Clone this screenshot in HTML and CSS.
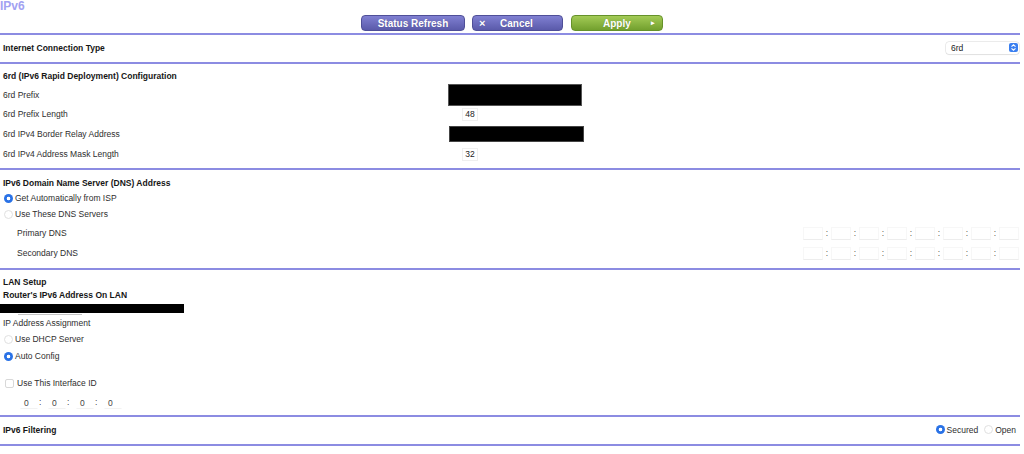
FILE: index.html
```html
<!DOCTYPE html>
<html>
<head>
<meta charset="utf-8">
<title>IPv6</title>
<link rel="stylesheet" href="styles.css">
</head>
<body>
<div class="page">
  <div class="title">IPv6</div>
  <div class="toolbar">
    <div class="btn btn-purple btn-refresh" role="button">Status Refresh</div>
    <div class="btn btn-purple btn-cancel" role="button"><span class="btn-x">×</span><span>Cancel</span></div>
    <div class="btn btn-green btn-apply" role="button"><span>Apply</span><span class="btn-arrow">▸</span></div>
  </div>
  <div class="rule"></div>

  <div class="row row-ict">
    <span class="heading">Internet Connection Type</span>
    <div class="select">
      <span>6rd</span>
      <span class="select-arrow">
        <svg width="9" height="9" viewBox="0 0 9 9"><path d="M2.5 3.6 L4.5 1.8 L6.5 3.6" fill="none" stroke="#fff" stroke-width="1.1"/><path d="M2.5 5.4 L4.5 7.2 L6.5 5.4" fill="none" stroke="#fff" stroke-width="1.1"/></svg>
      </span>
    </div>
  </div>
  <div class="rule"></div>

  <div class="section sec-6rd">
    <div class="heading h15">6rd (IPv6 Rapid Deployment) Configuration</div>
    <div class="field-row">
      <span class="label">6rd Prefix</span>
      <span class="redact redact-a"></span>
    </div>
    <div class="field-row">
      <span class="label">6rd Prefix Length</span>
      <span class="smallbox">48</span>
    </div>
    <div class="field-row">
      <span class="label">6rd IPv4 Border Relay Address</span>
      <span class="redact redact-b"></span>
    </div>
    <div class="field-row">
      <span class="label">6rd IPv4 Address Mask Length</span>
      <span class="smallbox">32</span>
    </div>
  </div>
  <div class="rule"></div>

  <div class="section sec-dns">
    <div class="heading h16">IPv6 Domain Name Server (DNS) Address</div>
    <label class="opt h15"><span class="radio on"></span>Get Automatically from ISP</label>
    <label class="opt h17"><span class="radio"></span>Use These DNS Servers</label>
    <div class="dns-row">
      <span class="sublabel">Primary DNS</span>
      <div class="ip6">
        <span class="seg"></span><span class="colon">:</span><span class="seg"></span><span class="colon">:</span><span class="seg"></span><span class="colon">:</span><span class="seg"></span><span class="colon">:</span><span class="seg"></span><span class="colon">:</span><span class="seg"></span><span class="colon">:</span><span class="seg"></span><span class="colon">:</span><span class="seg"></span>
      </div>
    </div>
    <div class="dns-row">
      <span class="sublabel">Secondary DNS</span>
      <div class="ip6">
        <span class="seg"></span><span class="colon">:</span><span class="seg"></span><span class="colon">:</span><span class="seg"></span><span class="colon">:</span><span class="seg"></span><span class="colon">:</span><span class="seg"></span><span class="colon">:</span><span class="seg"></span><span class="colon">:</span><span class="seg"></span><span class="colon">:</span><span class="seg"></span>
      </div>
    </div>
  </div>
  <div class="rule"></div>

  <div class="section sec-lan">
    <div class="heading h14">LAN Setup</div>
    <div class="heading h13">Router's IPv6 Address On LAN</div>
    <div class="redact redact-lan"></div>
    <div class="underline"></div>
    <div class="plain h17">IP Address Assignment</div>
    <label class="opt h15"><span class="radio"></span>Use DHCP Server</label>
    <label class="opt h18"><span class="radio on"></span>Auto Config</label>
    <label class="check-row"><span class="checkbox"></span>Use This Interface ID</label>
    <div class="iid">
      <span class="iseg">0</span><span class="icolon">:</span><span class="iseg">0</span><span class="icolon">:</span><span class="iseg">0</span><span class="icolon">:</span><span class="iseg">0</span>
    </div>
  </div>
  <div class="rule"></div>

  <div class="row row-filter">
    <span class="heading">IPv6 Filtering</span>
    <div class="filter-opts">
      <label class="opt-inline"><span class="radio on"></span>Secured</label>
      <label class="opt-inline"><span class="radio"></span>Open</label>
    </div>
  </div>
  <div class="rule"></div>
</div>
</body>
</html>
```

FILE: styles.css
```css
* { box-sizing: border-box; }

html, body {
  margin: 0;
  padding: 0;
  background: #ffffff;
}

body {
  font-family: "Liberation Sans", Arial, Helvetica, sans-serif;
  font-size: 8.5px;
  color: #2e2e2e;
  width: 1024px;
  overflow: hidden;
}

.page {
  width: 1024px;
}

.title {
  font-size: 12px;
  font-weight: bold;
  color: #a2a2f2;
  line-height: 12px;
  height: 12px;
}

.toolbar {
  display: flex;
  justify-content: center;
  height: 16px;
  margin-top: 3px;
  margin-bottom: 2px;
}

.btn {
  height: 16px;
  border-radius: 4px;
  font-size: 10px;
  font-weight: bold;
  color: #ffffff;
  display: flex;
  align-items: center;
  justify-content: flex-start;
  text-shadow: 0 0 1px rgba(0,0,0,0.25);
  cursor: pointer;
}

.btn-purple {
  background: linear-gradient(#8080d2, #5a5aaa);
  border: 1px solid #4f4f98;
}

.btn-green {
  background: linear-gradient(#a3cb56, #72a02e);
  border: 1px solid #66922a;
}

.btn-refresh {
  width: 104px;
  justify-content: center;
  margin-right: 7px;
}

.btn-cancel {
  width: 91px;
  margin-right: 8px;
  padding-left: 6px;
}

.btn-x {
  font-size: 11px;
  width: 21px;
}

.btn-apply {
  width: 92px;
  padding-left: 31px;
}

.btn-arrow {
  font-size: 7px;
  margin-left: 20px;
}

.rule {
  width: 1020px;
  height: 2px;
  background: #8c8ce2;
}

.heading {
  font-weight: bold;
  color: #161616;
}

.row {
  display: flex;
  align-items: center;
  justify-content: space-between;
  padding-left: 3px;
  width: 1020px;
}

.row-ict {
  height: 27px;
  padding-right: 1px;
  padding-bottom: 2px;
}

.select {
  width: 73px;
  height: 12px;
  border-radius: 3px;
  background: #ffffff;
  box-shadow: 0 0 0 0.5px #d8d8d8, 0 1px 1px rgba(0,0,0,0.08);
  display: flex;
  align-items: center;
  justify-content: space-between;
  padding-left: 5px;
  padding-right: 1px;
  color: #222;
}

.select-arrow {
  width: 9px;
  height: 9px;
  border-radius: 2px;
  background: #3a7ff0;
  display: flex;
}

.section {
  width: 1020px;
}

.h13 { height: 13px; line-height: 13px; }
.h14 { height: 14px; line-height: 14px; }
.h15 { height: 15px; line-height: 15px; }
.h16 { height: 16px; line-height: 16px; }
.h17 { height: 17px; line-height: 17px; }
.h18 { height: 18px; line-height: 18px; }

.sec-6rd {
  padding: 5px 0 4px 3px;
}

.field-row {
  display: grid;
  grid-template-columns: 445px auto;
  align-items: center;
  height: 20px;
}

.redact {
  background: #000000;
  display: block;
}

.redact-a {
  width: 134px;
  height: 22px;
  border: 1px solid #555;
}

.redact-b {
  width: 135px;
  height: 16px;
  margin-left: 1px;
  border: 1px solid #444;
}

.smallbox {
  width: 16px;
  height: 13px;
  margin-left: 14px;
  border: 1px solid #efefef;
  text-align: center;
  line-height: 11px;
  color: #222;
}

.sec-dns {
  padding: 5px 0 5px 3px;
}

.opt {
  display: flex;
  align-items: center;
}

.radio {
  display: inline-block;
  width: 9px;
  height: 9px;
  border-radius: 50%;
  border: 1px solid #e0e0e0;
  background: #ffffff;
  margin-left: 1px;
  margin-right: 2px;
  flex: none;
}

.radio.on {
  border: none;
  background: radial-gradient(circle, #ffffff 0 1.6px, #2a72e6 2.1px);
}

.dns-row {
  display: flex;
  align-items: center;
  justify-content: space-between;
  height: 20px;
  padding-right: 1px;
}

.sublabel {
  padding-left: 14px;
}

.ip6 {
  display: flex;
  align-items: center;
}

.seg {
  width: 20px;
  height: 13px;
  border: 1px solid #f7f7f7;
  border-bottom-color: #ededed;
}

.colon {
  width: 8px;
  text-align: center;
  color: #555;
}

.sec-lan {
  padding: 5px 0 4px 3px;
}

.redact-lan {
  width: 184px;
  height: 9px;
  margin-left: -3px;
  margin-top: 2px;
}

.underline {
  width: 64px;
  height: 1px;
  margin-left: 15px;
  margin-top: 1px;
  background: #c4c4c4;
}

.plain {
  color: #2e2e2e;
}

.check-row {
  display: flex;
  align-items: center;
  height: 20px;
  margin-top: 8px;
}

.checkbox {
  width: 9px;
  height: 9px;
  border: 1px solid #d8d8d8;
  border-radius: 2px;
  margin-left: 2px;
  margin-right: 3px;
  background: #fff;
}

.iid {
  display: flex;
  align-items: center;
  height: 18px;
  padding-left: 17px;
}

.iseg {
  width: 18px;
  height: 13px;
  line-height: 13px;
  padding-left: 3px;
  border: 1px solid transparent;
  border-bottom-color: #f2f2f2;
  color: #444;
}

.icolon {
  width: 10px;
  text-align: left;
  padding-left: 1px;
  color: #444;
}

.row-filter {
  height: 25px;
  margin-bottom: 2px;
  padding-right: 4px;
}

.filter-opts {
  display: flex;
  align-items: center;
}

.opt-inline {
  display: flex;
  align-items: center;
  margin-left: 5px;
}

.opt-inline .radio {
  margin-right: 2px;
}
```
